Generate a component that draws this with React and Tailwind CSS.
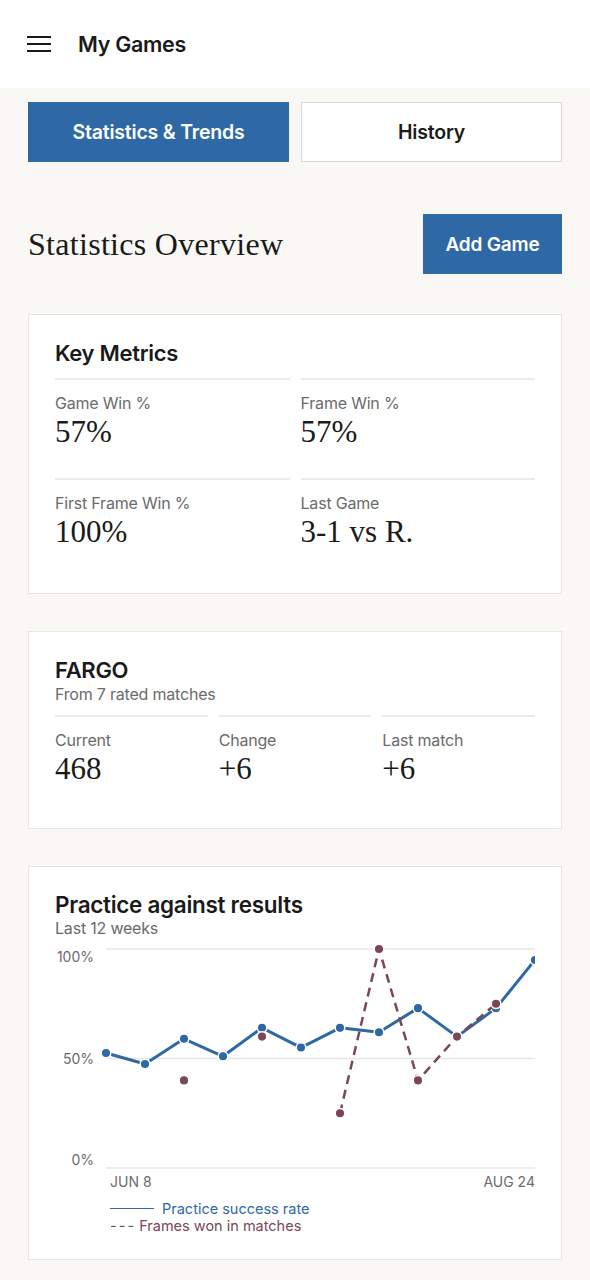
import React from 'react';

const sans = { fontFamily: 'Inter, "Liberation Sans", Arial, sans-serif' };
const serif = { fontFamily: '"Liberation Serif", "Times New Roman", serif' };

// chart data (percent), null = no value that week
const practice = [52.5, 47.5, 59, 51, 64, 55, 64, 62, 73, 60, 73, 95];
const frames = [null, null, 40, null, 60, null, 25, 100, 40, 60, 75, null];

const X0 = 51;
const STEP = 39;
const yOf = (v) => 227 - v * 2.19;

function Metric({ label, value }) {
  return (
    <div className="border-t-2 border-[#ebebe9] pt-[13px]">
      <div className="text-[16px] leading-5 tracking-[-0.2px] text-[#6b6b6b]" style={sans}>{label}</div>
      <div className="mt-[2px] text-[31px] leading-[34px] text-[#1a1a1a]" style={serif}>{value}</div>
    </div>
  );
}

function Chart() {
  const blue = practice.map((v, i) => [X0 + i * STEP, yOf(v)]);
  const red = frames.map((v, i) => (v == null ? null : [X0 + i * STEP, yOf(v)]));
  const dashed = red.slice(6, 11).map((p) => p.join(',')).join(' ');

  return (
    <svg width="480" height="255" viewBox="0 0 480 255" className="block">
      {[8, 117.5, 227].map((y) => (
        <line key={y} x1="51" x2="480" y1={y} y2={y} stroke="#e6e6e4" strokeWidth="1.5" />
      ))}
      <g fontSize="14" fill="#6b6b6b" style={sans}>
        <text x="39" y="21" textAnchor="end">100%</text>
        <text x="39" y="123" textAnchor="end">50%</text>
        <text x="39" y="224" textAnchor="end">0%</text>
        <text x="55" y="246">JUN 8</text>
        <text x="480" y="246" textAnchor="end">AUG 24</text>
      </g>
      <polyline
        points={blue.map((p) => p.join(',')).join(' ')}
        fill="none"
        stroke="#2e69a5"
        strokeWidth="3"
        strokeLinejoin="round"
      />
      {blue.map(([x, y], i) => (
        <circle key={i} cx={x} cy={y} r="4.8" fill="#2e69a5" stroke="#fff" strokeWidth="1.5" />
      ))}
      <polyline
        points={dashed}
        fill="none"
        stroke="#7a4757"
        strokeWidth="2.5"
        strokeDasharray="9 6"
      />
      {red.map((p, i) =>
        p ? <circle key={i} cx={p[0]} cy={p[1]} r="4.8" fill="#7a4757" stroke="#fff" strokeWidth="1.5" /> : null
      )}
    </svg>
  );
}

export default function App() {
  return (
    <div className="min-h-[1280px] bg-[#f9f8f4]" style={sans}>
      <header className="flex h-[88px] items-center bg-white px-[27px]">
        <div className="flex w-[24px] flex-col gap-[4.5px]">
          <span className="h-[2.5px] bg-[#1a1a1a]" />
          <span className="h-[2.5px] bg-[#1a1a1a]" />
          <span className="h-[2.5px] bg-[#1a1a1a]" />
        </div>
        <h1 className="ml-[27px] text-[21.5px] font-semibold tracking-[-0.3px] text-[#1a1a1a]">My Games</h1>
      </header>

      <main className="px-[28px] pt-[14px] pb-[21px]">
        <div className="grid grid-cols-2 gap-3">
          <button className="h-[60px] bg-[#2e69a5] pt-[2px] text-[19.5px] font-semibold tracking-[-0.2px] text-white">Statistics &amp; Trends</button>
          <button className="h-[60px] border border-[#d6d6d4] bg-white pt-[2px] text-[19.5px] font-semibold tracking-[-0.2px] text-[#1a1a1a]">History</button>
        </div>

        <div className="mt-[52px] flex items-center justify-between">
          <h2 className="text-[32px] tracking-[0.3px] text-[#1a1a1a]" style={serif}>Statistics Overview</h2>
          <button className="h-[60px] w-[139px] bg-[#2e69a5] pt-[2px] text-[19px] font-semibold tracking-[-0.2px] text-white">Add Game</button>
        </div>

        <section className="mt-10 border border-[#e6e6e3] bg-white px-[26px] pt-[24px] pb-[15px]">
          <h3 className="text-[22px] font-semibold leading-7 tracking-[-0.3px] text-[#1a1a1a]">Key Metrics</h3>
          <div className="mt-[11px] grid grid-cols-2 gap-x-[11px]">
            <div className="h-[100px]"><Metric label="Game Win %" value="57%" /></div>
            <div className="h-[100px]"><Metric label="Frame Win %" value="57%" /></div>
            <div className="h-[100px]"><Metric label="First Frame Win %" value="100%" /></div>
            <div className="h-[100px]"><Metric label="Last Game" value="3-1 vs R." /></div>
          </div>
        </section>

        <section className="mt-[37px] border border-[#e6e6e3] bg-white px-[26px] pt-[24px] pb-[42px]">
          <h3 className="text-[22px] font-semibold leading-7 tracking-[-0.3px] text-[#1a1a1a]">FARGO</h3>
          <p className="text-[16px] leading-5 tracking-[-0.2px] text-[#6b6b6b]">From 7 rated matches</p>
          <div className="mt-[11px] grid grid-cols-3 gap-x-[11px]">
            <Metric label="Current" value="468" />
            <Metric label="Change" value="+6" />
            <Metric label="Last match" value="+6" />
          </div>
        </section>

        <section className="mt-[37px] border border-[#e6e6e3] bg-white px-[26px] pt-[25px] pb-[25px]">
          <h3 className="text-[22.5px] font-semibold leading-[26px] tracking-[-0.3px] text-[#1a1a1a]">Practice against results</h3>
          <p className="text-[16px] leading-5 tracking-[-0.2px] text-[#6b6b6b]">Last 12 weeks</p>
          <div className="mt-[3px]">
            <Chart />
          </div>
          <div className="mt-[4px] pl-[55px] text-[14.5px] leading-[17px]">
            <div className="flex items-center gap-2 text-[#2e69a5]">
              <span className="h-[1.5px] w-[44px] bg-[#2e69a5]" />
              <span>Practice success rate</span>
            </div>
            <div className="flex items-center gap-[6px] text-[#7a4757]">
              <span className="tracking-[-1px] text-[#555]">- - -</span>
              <span>Frames won in matches</span>
            </div>
          </div>
        </section>
      </main>
    </div>
  );
}
